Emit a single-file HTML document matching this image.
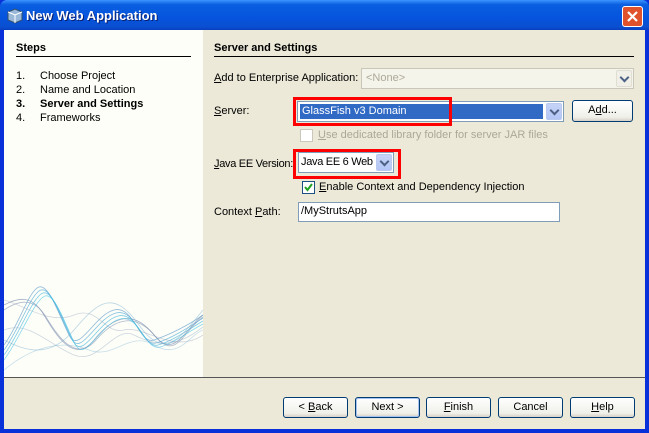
<!DOCTYPE html>
<html><head><style>
*{margin:0;padding:0;box-sizing:border-box}
body{width:649px;height:433px;overflow:hidden;font-family:"Liberation Sans",Arial,sans-serif;font-size:11px;color:#000;background:#0831d9;position:relative}
.a{position:absolute}
#title{left:0;top:0;width:649px;height:30px;background:linear-gradient(#3d95ff 0%,#0a5fe0 15%,#0654dd 60%,#0a4fd0 90%,#0840c0 100%);border-radius:7px 7px 0 0}
#title span{position:absolute;left:26px;top:8px;color:#fff;font-weight:bold;font-size:13px;text-shadow:1px 1px #0a1e6e}
#client{left:4px;top:30px;width:641px;height:399px;background:#ece9d8}
#left{left:4px;top:30px;width:199px;height:348px;background:#fefef8}
.u{text-decoration:underline}
.btn{position:absolute;top:397px;width:65px;height:21px;border:1px solid #003c74;border-radius:3px;background:linear-gradient(#fff,#f0f0ea 80%,#d6d0c5);text-align:center;line-height:19px}
.combo{position:absolute;border:1px solid #7f9db9;background:#fff;height:21px}
.arr{position:absolute;right:1px;top:1px;width:16px;height:17px;background:linear-gradient(#c6d3f7,#b3c6f5);border-radius:2px;border:1px solid #b9c9ef}
.arr:after{content:"";position:absolute;left:4px;top:3px;width:5px;height:5px;border-right:2px solid #4d6185;border-bottom:2px solid #4d6185;transform:rotate(45deg)}
</style></head><body>
<div class="a" id="title"><span>New Web Application</span>
<svg class="a" style="left:7px;top:8px" width="16" height="16"><path d="M8 1 L15 4 L15 12 L8 15 L1 12 L1 4Z" fill="#9ab8d8" stroke="#33506e"/><path d="M1 4 L8 7 L15 4 M8 7 L8 15" stroke="#fff" fill="none"/></svg>
<div class="a" style="left:622px;top:6px;width:21px;height:21px;border:1px solid #fff;border-radius:3px;background:#e0522c"><svg width="19" height="19"><path d="M5 5 L14 14 M14 5 L5 14" stroke="#fff" stroke-width="2.2"/></svg></div>
</div>
<div class="a" id="client"></div>
<div class="a" id="left"></div>
<svg class="a" style="left:4px;top:285px" width="199" height="93">
<g fill="none" stroke-width="0.8">
<path d="M0 20 C15 12,28 10,40 30 S70 80,90 55 S130 25,150 50 S180 45,199 30" stroke="#6a7fa8" opacity=".6"/>
<path d="M0 25 C15 15,30 12,42 32 S72 78,92 55 S132 28,152 52 S180 45,199 32" stroke="#7a8eb0" opacity=".6"/>
<path d="M0 60 C15 40,25 5,35 2 S55 30,65 50 S90 30,110 25 S135 60,150 55 S185 40,199 30" stroke="#5f9ccc" opacity=".7"/>
<path d="M0 65 C15 45,27 8,37 5 S57 33,67 53 S92 33,112 28 S137 62,152 58 S185 42,199 33" stroke="#50aad8" opacity=".7"/>
<path d="M0 70 C15 50,29 11,39 8 S59 36,69 56 S94 36,114 31 S139 64,154 60 S185 44,199 36" stroke="#46b6e0" opacity=".7"/>
<path d="M0 75 C15 55,31 14,41 11 S61 39,71 59 S96 39,116 34 S141 66,156 62 S185 46,199 39" stroke="#3cc0e6" opacity=".6"/>
<path d="M0 45 C25 35,45 60,70 70 S110 40,130 50 S170 65,199 42" stroke="#9ab0c8" opacity=".5"/>
<path d="M0 85 C30 60,60 55,85 65 S125 45,150 60 S185 50,199 45" stroke="#90c0dc" opacity=".5"/>
<path d="M0 55 C20 65,45 75,70 45 S110 5,135 40 S175 55,199 25" stroke="#7ab0d0" opacity=".5"/>
<path d="M0 15 C20 20,45 40,70 30 S100 50,120 45 S170 70,199 50" stroke="#8d9cb8" opacity=".4"/>
</g></svg>
<div class="a" style="left:4px;top:377px;width:641px;height:1px;background:#555"></div>
<div class="a" style="left:16px;top:42px;font-weight:bold">Steps</div>
<div class="a" style="left:16px;top:56px;width:175px;height:1px;background:#000"></div>
<div class="a" style="left:16px;top:69px;line-height:14px">1.<br>2.<br><b>3.</b><br>4.</div>
<div class="a" style="left:40px;top:69px;line-height:14px">Choose Project<br>Name and Location<br><b>Server and Settings</b><br>Frameworks</div>
<div class="a" style="left:214px;top:42px;font-weight:bold">Server and Settings</div>
<div class="a" style="left:214px;top:56px;width:420px;height:1px;background:#000"></div>
<div class="a" style="left:214px;top:72px"><span class="u">A</span>dd to Enterprise Application:</div>
<div class="combo" style="left:361px;top:68px;width:273px;border-color:#c9c7ba;background:#f5f4ea;color:#aca899;padding:3px 4px">&lt;None&gt;<div class="arr" style="background:#f1f0e8;border-color:#e0ded2"></div></div>
<div class="a" style="left:214px;top:105px"><span class="u">S</span>erver:</div>
<div class="combo" style="left:297px;top:101px;width:267px"><div class="a" style="left:2px;top:2px;width:243px;height:15px;background:#316ac5;color:#fff;padding-left:2px;line-height:15px">GlassFish v3 Domain</div><div class="arr"></div></div>
<div class="a" style="left:293px;top:97px;width:159px;height:29px;border:3px solid #f00"></div>
<div class="btn" style="left:572px;top:100px;width:61px;height:22px">A<span class="u">d</span>d...</div>
<div class="a" style="left:300px;top:129px;width:13px;height:13px;border:1px solid #cac8bb;background:#fff"></div>
<div class="a" style="left:318px;top:129px;color:#aca899"><span class="u">U</span>se dedicated library folder for server JAR files</div>
<div class="a" style="left:214px;top:158px;letter-spacing:-0.3px"><span class="u">J</span>ava EE Version:</div>
<div class="combo" style="left:298px;top:152px;width:96px;padding:3px 2px;letter-spacing:-0.3px">Java EE 6 Web<div class="arr"></div></div>
<div class="a" style="left:293px;top:149px;width:108px;height:30px;border:3px solid #f00"></div>
<div class="a" style="left:302px;top:181px;width:13px;height:13px;border:1px solid #1c5180;background:#fff"><svg width="11" height="11"><path d="M2 5 L4.5 8 L9 2" stroke="#21a121" stroke-width="2" fill="none"/></svg></div>
<div class="a" style="left:319px;top:181px"><span class="u">E</span>nable Context and Dependency Injection</div>
<div class="a" style="left:214px;top:206px">Context <span class="u">P</span>ath:</div>
<div class="combo" style="left:298px;top:202px;width:262px;height:20px;padding:2px 2px">/MyStrutsApp</div>
<div class="btn" style="left:283px">&lt; <span class="u">B</span>ack</div>
<div class="btn" style="left:355px;border-color:#003c74;box-shadow:inset 0 0 0 1px #a6c2f0">Next &gt;</div>
<div class="btn" style="left:426px"><span class="u">F</span>inish</div>
<div class="btn" style="left:498px">Cancel</div>
<div class="btn" style="left:570px"><span class="u">H</span>elp</div>
</body></html>
